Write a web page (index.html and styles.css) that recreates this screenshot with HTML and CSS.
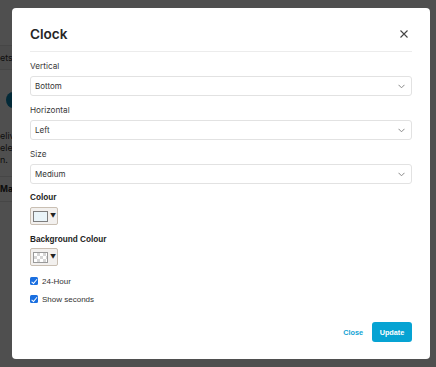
FILE: index.html
```html
<!DOCTYPE html>
<html lang="en">
<head>
<meta charset="utf-8">
<title>Clock</title>
<link rel="stylesheet" href="styles.css">
</head>
<body>
<div class="page">
  <div class="tabs"><span class="tab">ets</span></div>
  <div class="row-avatar"><span class="avatar"></span></div>
  <div class="desc">
    <p>eliv</p>
    <p>eles</p>
    <p>n.</p>
  </div>
  <div class="section-title">Ma</div>
</div>
<div class="overlay"></div>
<div class="modal" role="dialog" aria-labelledby="modal-title">
  <header class="modal-header">
    <h1 id="modal-title" class="modal-title">Clock</h1>
    <button class="close-x" aria-label="Close">
      <svg width="8" height="8" viewBox="0 0 8 8"><path d="M0.5 0.5 L7.5 7.5 M7.5 0.5 L0.5 7.5" stroke="#444" stroke-width="1.1" fill="none"/></svg>
    </button>
  </header>
  <div class="modal-body">
    <div class="field">
      <label class="label">Vertical</label>
      <div class="select"><span>Bottom</span><svg class="chev" width="7" height="5" viewBox="0 0 7 5"><path d="M0.5 0.8 L3.5 3.8 L6.5 0.8" stroke="#888" stroke-width="1" fill="none"/></svg></div>
    </div>
    <div class="field">
      <label class="label">Horizontal</label>
      <div class="select"><span>Left</span><svg class="chev" width="7" height="5" viewBox="0 0 7 5"><path d="M0.5 0.8 L3.5 3.8 L6.5 0.8" stroke="#888" stroke-width="1" fill="none"/></svg></div>
    </div>
    <div class="field">
      <label class="label">Size</label>
      <div class="select"><span>Medium</span><svg class="chev" width="7" height="5" viewBox="0 0 7 5"><path d="M0.5 0.8 L3.5 3.8 L6.5 0.8" stroke="#888" stroke-width="1" fill="none"/></svg></div>
    </div>
    <div class="field color-field">
      <label class="label bold">Colour</label>
      <div class="picker"><span class="swatch light"></span><span class="tri">▼</span></div>
    </div>
    <div class="field color-field">
      <label class="label bold">Background Colour</label>
      <div class="picker"><span class="swatch checker"></span><span class="tri">▼</span></div>
    </div>
    <label class="check"><input type="checkbox" checked><span>24-Hour</span></label>
    <label class="check"><input type="checkbox" checked><span>Show seconds</span></label>
  </div>
  <footer class="modal-footer">
    <button class="btn-link">Close</button>
    <button class="btn-primary">Update</button>
  </footer>
</div>
</body>
</html>
```
FILE: styles.css
```css
html, body {
  margin: 0;
  padding: 0;
}
body {
  width: 436px;
  height: 367px;
  overflow: hidden;
  position: relative;
  background: #fff;
  font-family: Inter, "Noto Sans", sans-serif;
  color: #2a2a2a;
}
.page {
  width: 20px;
}
.tabs {
  margin-top: 45px;
  height: 23px;
  border-top: 1px solid #e2e2e2;
  border-bottom: 1px solid #e2e2e2;
  background: #f6f6f6;
  display: flex;
  align-items: center;
}
.tab {
  font-size: 9px;
  color: #333;
}
.row-avatar {
  height: 30px;
  margin-top: 15px;
  display: flex;
  align-items: center;
}
.avatar {
  width: 16px;
  height: 16px;
  border-radius: 50%;
  background: #0b87b5;
  margin-left: 6px;
}
.desc {
  margin-top: 15px;
  font-size: 9px;
  line-height: 12px;
  color: #333;
}
.desc p {
  margin: 0;
}
.section-title {
  margin-top: 10px;
  font-size: 8.5px;
  font-weight: 700;
  padding: 7px 0 7px 0;
  border-top: 1px solid #e2e2e2;
  border-bottom: 1px solid #e2e2e2;
}
.overlay {
  position: absolute;
  inset: 0;
  background: rgba(0, 0, 0, 0.69);
}
.modal {
  position: absolute;
  left: 12px;
  top: 8px;
  width: 418px;
  height: 351px;
  box-sizing: border-box;
  background: #fff;
  border-radius: 4px;
  padding: 0 18px;
  display: flex;
  flex-direction: column;
}
.modal-header {
  display: flex;
  align-items: center;
  justify-content: space-between;
  padding: 18px 0 9px;
  border-bottom: 1px solid #ececec;
}
.modal-title {
  margin: 0;
  font-size: 13.6px;
  line-height: 16px;
  font-weight: 600;
  color: #262626;
}
.close-x {
  border: 0;
  background: none;
  padding: 0;
  margin-right: 4px;
  width: 8px;
  height: 8px;
  display: flex;
}
.modal-body {
  padding-top: 7px;
  display: flex;
  flex-direction: column;
}
.field {
  display: flex;
  flex-direction: column;
  margin-bottom: 7px;
}
.label {
  font-size: 8.2px;
  line-height: 14px;
  color: #3a3a3a;
  margin-bottom: 3px;
}
.label.bold {
  font-family: "Liberation Sans", Arial, sans-serif;
  font-weight: 700;
  color: #222;
  margin-bottom: 2px;
}
.color-field {
  margin-bottom: 8px;
}
.color-field + .color-field .label.bold {
  margin-bottom: 1px;
}
.select {
  height: 20px;
  box-sizing: border-box;
  border: 1px solid #e2e2e2;
  border-radius: 3px;
  display: flex;
  align-items: center;
  justify-content: space-between;
  padding: 0 6px 0 4px;
  font-size: 8px;
  color: #333;
}
.chev {
  display: block;
}
.picker {
  width: 28px;
  height: 18px;
  box-sizing: border-box;
  border: 1px solid #c9bfb3;
  border-radius: 2px;
  background: #f2f0ee;
  display: flex;
  align-items: center;
  padding-left: 2px;
  gap: 2px;
}
.swatch {
  width: 15px;
  height: 11px;
  box-sizing: border-box;
  border: 1px solid #7d7d7d;
}
.swatch.light {
  background: #e9f4f9;
}
.swatch.checker {
  border-color: #9a9a9a;
  background-color: #fff;
  background-image:
    linear-gradient(45deg, #d6d6d6 25%, transparent 25%, transparent 75%, #d6d6d6 75%),
    linear-gradient(45deg, #d6d6d6 25%, transparent 25%, transparent 75%, #d6d6d6 75%);
  background-size: 6px 6px;
  background-position: 0 0, 3px 3px;
}
.tri {
  font-size: 6px;
  color: #222;
  line-height: 1;
}
.check {
  display: flex;
  align-items: center;
  gap: 4px;
  height: 14px;
  font-family: "Liberation Sans", Arial, sans-serif;
  font-size: 8px;
  color: #333;
  margin-bottom: 4px;
}
.check input {
  appearance: none;
  -webkit-appearance: none;
  margin: 0;
  width: 8px;
  height: 8px;
  border-radius: 1.5px;
  background: #1a6fe0;
  position: relative;
}
.check input::after {
  content: "";
  position: absolute;
  left: 2.5px;
  top: 0.5px;
  width: 2px;
  height: 4.5px;
  border: solid #fff;
  border-width: 0 1.2px 1.2px 0;
  transform: rotate(40deg);
}
.modal-footer {
  margin-top: auto;
  padding-bottom: 17px;
  display: flex;
  justify-content: flex-end;
  align-items: center;
  gap: 9px;
}
.btn-link {
  border: 0;
  background: none;
  padding: 0;
  font-family: "Liberation Sans", Arial, sans-serif;
  font-size: 7.3px;
  font-weight: 700;
  color: #12a3d4;
}
.btn-primary {
  border: 0;
  border-radius: 3px;
  background: #06a3d3;
  color: #fff;
  font-family: "Liberation Sans", Arial, sans-serif;
  font-size: 7.3px;
  font-weight: 700;
  width: 40px;
  height: 20px;
  padding: 0;
}
```
